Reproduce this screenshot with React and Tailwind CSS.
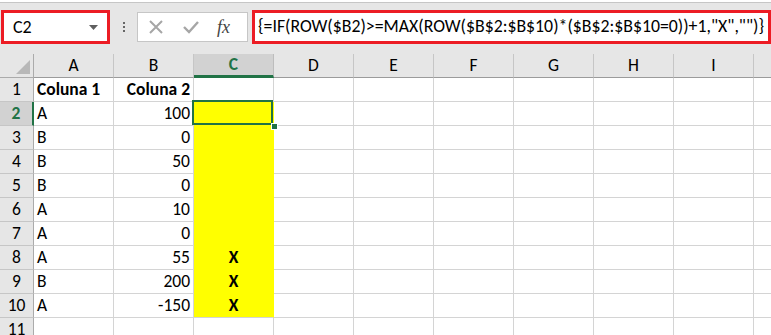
import React from "react";

const cols = ["A", "B", "C", "D", "E", "F", "G", "H", "I", ""];

const rows = [
  ["Coluna 1", "Coluna 2", ""],
  ["A", "100", ""],
  ["B", "0", ""],
  ["B", "50", ""],
  ["B", "0", ""],
  ["A", "10", ""],
  ["A", "0", ""],
  ["A", "55", "X"],
  ["B", "200", "X"],
  ["A", "-150", "X"],
  ["", "", ""],
];

const font = { fontFamily: "Calibri, Carlito, Lato, 'Liberation Sans', sans-serif" };

export default function App() {
  return (
    <div className="w-[771px] h-[335px] overflow-hidden bg-white text-black" style={font}>
      {/* Formula bar */}
      <div className="h-[52px] bg-[#e6e6e6] border-t-[1px] border-[#c6c6c6] mt-[2px] flex items-start pt-[7px] pl-[1px]">
        <div className="w-[109px] h-[34px] border-[3px] border-[#ec1c24] bg-white flex items-center justify-between pl-[9px] pr-[9px]">
          <span className="text-[18px] leading-none">C2</span>
          <svg width="9" height="5" viewBox="0 0 9 5">
            <path d="M0 0 L9 0 L4.5 5 Z" fill="#5f5f5f" />
          </svg>
        </div>
        <div className="w-[27px] h-[34px] flex flex-col items-center justify-center gap-[2px]">
          <span className="w-[2px] h-[2px] bg-[#666]" />
          <span className="w-[2px] h-[2px] bg-[#666]" />
          <span className="w-[2px] h-[2px] bg-[#666]" />
        </div>
        <div className="mt-[2px] w-[111px] h-[30px] bg-white border border-[#c6c6c6] flex items-center">
          <svg width="14" height="14" viewBox="0 0 14 14" className="ml-[11px]">
            <path d="M1 1 L13 13 M13 1 L1 13" stroke="#a6a6a6" strokeWidth="2" />
          </svg>
          <svg width="16" height="14" viewBox="0 0 16 14" className="ml-[20px]">
            <path d="M1 7 L6 12 L15 2" stroke="#a6a6a6" strokeWidth="2.4" fill="none" />
          </svg>
          <span
            className="ml-[18px] text-[18px] italic text-[#444] leading-none"
            style={{ fontFamily: "'Liberation Serif', serif" }}
          >
            fx
          </span>
        </div>
        <div className="ml-[4px] w-[519px] h-[34px] border-[3px] border-[#ec1c24] bg-white flex items-center pl-[3px]">
          <span className="text-[17.8px] leading-none whitespace-nowrap">
            {'{=IF(ROW($B2)>=MAX(ROW($B$2:$B$10)*($B$2:$B$10=0))+1,"X","")}'}
          </span>
        </div>
      </div>

      {/* Sheet */}
      <div className="grid grid-cols-[34px_repeat(9,80px)_80px] text-[17.5px]">
        {/* column header row */}
        <div className="h-[24px] bg-[#e6e6e6] border-r border-b border-[#ababab] relative">
          <svg width="14" height="14" viewBox="0 0 14 14" className="absolute right-[3px] bottom-[3px]">
            <path d="M14 0 L14 14 L0 14 Z" fill="#b8b8b8" />
          </svg>
        </div>
        {cols.map((c, i) =>
          c === "C" ? (
            <div
              key={i}
              className="h-[24px] bg-[#d2d2d2] border-r border-[#bdbdbd] border-b-[3px] border-b-[#217346] flex items-center justify-center font-bold text-[#217346]"
            >
              {c}
            </div>
          ) : (
            <div
              key={i}
              className="h-[24px] bg-[#e6e6e6] border-r border-[#c6c6c6] border-b border-b-[#9b9b9b] flex items-center justify-center"
            >
              {c}
            </div>
          )
        )}

        {rows.map((r, ri) => {
          const n = ri + 1;
          const sel = n === 2;
          return (
            <React.Fragment key={ri}>
              <div
                className={
                  sel
                    ? "h-[24px] bg-[#d2d2d2] border-r-[2px] border-r-[#217346] border-b border-b-[#c6c6c6] flex items-center justify-center font-bold text-[#217346]"
                    : "h-[24px] bg-[#e6e6e6] border-r border-r-[#ababab] border-b border-b-[#c6c6c6] flex items-center justify-center"
                }
              >
                {n}
              </div>
              {cols.map((c, ci) => {
                const v = r[ci] || "";
                const yellow = c === "C" && n >= 2 && n <= 10;
                let cls = "h-[24px] border-r border-b border-[#d4d4d4] flex items-center px-[3px] relative";
                if (yellow) cls += " bg-[#ffff00] border-r-[#ffff00] border-b-[#ffff00]";
                if (n === 10 && yellow) cls = cls.replace("border-b-[#ffff00]", "border-b-[#d4d4d4]");
                if (ci === 1) cls += " justify-end";
                if (ci === 2) cls += " justify-center font-bold";
                if (n === 1) cls += " font-bold";
                if (sel && c === "C") cls += " z-10";
                return (
                  <div key={ci} className={cls}>
                    {v}
                    {sel && c === "C" && (
                      <>
                        <div className="absolute left-[-2px] top-[-2px] w-[81px] h-[25px] border-[2px] border-[#217346]" />
                        <div className="absolute right-[-5px] bottom-[-5px] w-[7px] h-[7px] bg-[#217346] border border-white" />
                      </>
                    )}
                  </div>
                );
              })}
            </React.Fragment>
          );
        })}
      </div>
    </div>
  );
}
